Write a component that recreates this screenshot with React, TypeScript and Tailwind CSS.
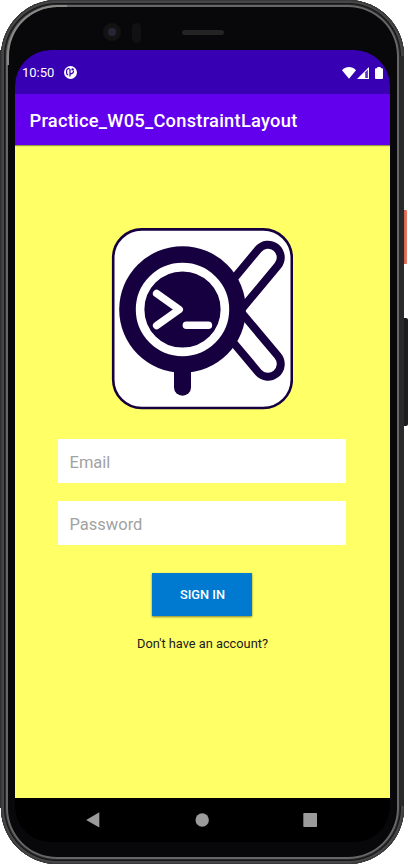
const font = "font-['Roboto','Liberation_Sans',sans-serif]";

function Logo() {
  return (
    <svg width="182" height="182" viewBox="0 0 182 182" className="block">
      <rect x="2.2" y="1.4" width="178.6" height="178.6" rx="28.5" fill="#fff" stroke="#16003f" strokeWidth="2.6" />
      <g strokeLinecap="round" fill="none">
        <path d="M157 29.5L112.5 83M157 136L112.5 83" stroke="#16003f" strokeWidth="33.5" />
        <path d="M157 29.5L112.5 83M157 136L112.5 83" stroke="#fff" strokeWidth="17.5" />
      </g>
      <path d="M71.5 140V159.3" stroke="#16003f" strokeWidth="17" strokeLinecap="round" />
      <circle cx="71.5" cy="81.5" r="63.3" fill="#16003f" />
      <circle cx="71.5" cy="81.5" r="42.4" fill="none" stroke="#fff" strokeWidth="8.6" />
      <path d="M45.7 65.5L68.2 81.5L45.7 97.5M75.4 97.3H97.4" fill="none" stroke="#fff" strokeWidth="7.6" strokeLinecap="round" strokeLinejoin="round" />
    </svg>
  );
}

function StatusBar() {
  return (
    <div className="flex h-[44px] shrink-0 items-center bg-[#3700b3] pl-[7px] pr-[7px] pt-px text-white">
      <span className="text-[13px] leading-[16px]">10:50</span>
      <svg width="13" height="13" viewBox="0 0 13 13" className="ml-[10px]">
        <circle cx="6.5" cy="6.5" r="6.5" fill="#fff" />
        <path d="M5.6 2.6H4.2Q2.6 2.8 2.6 5V7Q2.6 8.6 4.2 9M6 3V10.4M6 7.8C8.6 7.8 9.6 6.6 9.6 4.8" fill="none" stroke="#3700b3" strokeWidth="1.2" />
        <circle cx="8.6" cy="3.4" r="1.2" fill="#3700b3" />
      </svg>
      <div className="ml-auto flex items-center">
        <svg width="14" height="12" viewBox="0 0 14 12">
          <path d="M0 3.2C4-1 10-1 14 3.2L7 11.8Z" fill="#fff" />
        </svg>
        <svg width="12" height="12" viewBox="0 0 12 12" className="ml-[1px]">
          <path d="M0 12L12 0V12Z" fill="#fff" />
          <path d="M8.2 5.2V11H10.9V2.5Z" fill="#3700b3" opacity=".8" />
        </svg>
        <svg width="8" height="12" viewBox="0 0 8 12" className="ml-[6px]">
          <path d="M2.3 0H5.7V1.2H7Q8 1.2 8 2.2V11Q8 12 7 12H1Q0 12 0 11V2.2Q0 1.2 1 1.2H2.3Z" fill="#fff" />
        </svg>
      </div>
    </div>
  );
}

function NavBar() {
  return (
    <div className="flex h-[44px] shrink-0 items-center bg-black text-[#9b9b9b]">
      <svg width="375" height="44" viewBox="0 0 375 44" fill="currentColor">
        <path d="M71.2 22L84.3 14.3V29.5Z" />
        <circle cx="187.2" cy="22" r="6.7" />
        <rect x="288.3" y="15" width="13.7" height="14" rx="0.7" />
      </svg>
    </div>
  );
}

export default function App() {
  return (
    <div className={`relative h-[865px] w-[408px] overflow-hidden bg-white ${font}`}>
      <div className="absolute left-0 top-[50px] h-[758px] w-[8px] bg-[#303030]" />
      <div className="absolute left-[402px] top-[210px] h-[54px] w-[5px] rounded-r-[1px] bg-linear-to-r from-[#b9503c] to-[#f0806a]" />
      <div className="absolute left-[402px] top-[318px] h-[108px] w-[6px] rounded-r-[2px] bg-[#1d1d1f]" />
      <div className="relative ml-[1px] h-[863.5px] w-[403px] rounded-[56px] bg-[#08080a] pl-[14px] pt-[50px] shadow-[inset_0_0_0_1px_#3a3a3a,inset_0_0_0_3px_#464648,inset_0_0_0_4px_#161616,inset_0_0_0_5px_#2b2b2d,inset_0_0_0_7px_#666666]">
        <div className="absolute left-[398px] top-[56px] h-[750px] w-[5px] bg-[#29292b]" />
        <div className="absolute left-[6px] top-[5px] h-[60px] w-[60px] rounded-tl-[51px] border-l-2 border-t-2 border-[#8a8a88]" />
        <div className="absolute left-[102px] top-[23px] size-[18px] rounded-full bg-[#131314]">
          <div className="ml-[5px] mt-[5px] size-[8px] rounded-full bg-[#252733]" />
        </div>
        <div className="absolute left-[131px] top-[23px] h-[20px] w-[9px] rounded-full bg-[#111112]" />
        <div className="absolute left-[181px] top-[30px] h-[5px] w-[42px] rounded-full bg-[#242425]" />
        <div className="h-[792px] w-[375px] overflow-hidden rounded-[36px] bg-black">
          <div className="flex h-full flex-col">
            <StatusBar />
            <header className="relative z-10 flex h-[51px] shrink-0 items-center bg-[#6200ee] pl-[14.5px] pt-[2px] text-[18.3px] font-medium tracking-[0.26px] text-white shadow-[0_1px_1px_rgba(0,0,0,0.4)]">
              Practice_W05_ConstraintLayout
            </header>
            <main className="flex flex-1 flex-col items-center bg-[#ffff66] pr-px pt-[83px]">
              <Logo />
              <div className="mt-[29px] flex h-[44px] w-[288px] items-center bg-white pl-[11.5px] pt-[4px] text-[16.5px] text-[#a2a2a2]">Email</div>
              <div className="mt-[18px] flex h-[44px] w-[288px] items-center bg-white pl-[11.5px] pt-[4px] text-[16.5px] text-[#a2a2a2]">Password</div>
              <button className="mt-[28px] h-[43px] w-[100px] bg-[#0079d0] pl-px text-[12.8px] font-medium text-white shadow-[0_1px_2px_rgba(0,0,0,0.5)]">SIGN IN</button>
              <p className="mt-[19px] pl-px text-[12.8px] leading-[17px] text-[#202020]">Don't have an account?</p>
            </main>
            <NavBar />
          </div>
        </div>
      </div>
    </div>
  );
}
